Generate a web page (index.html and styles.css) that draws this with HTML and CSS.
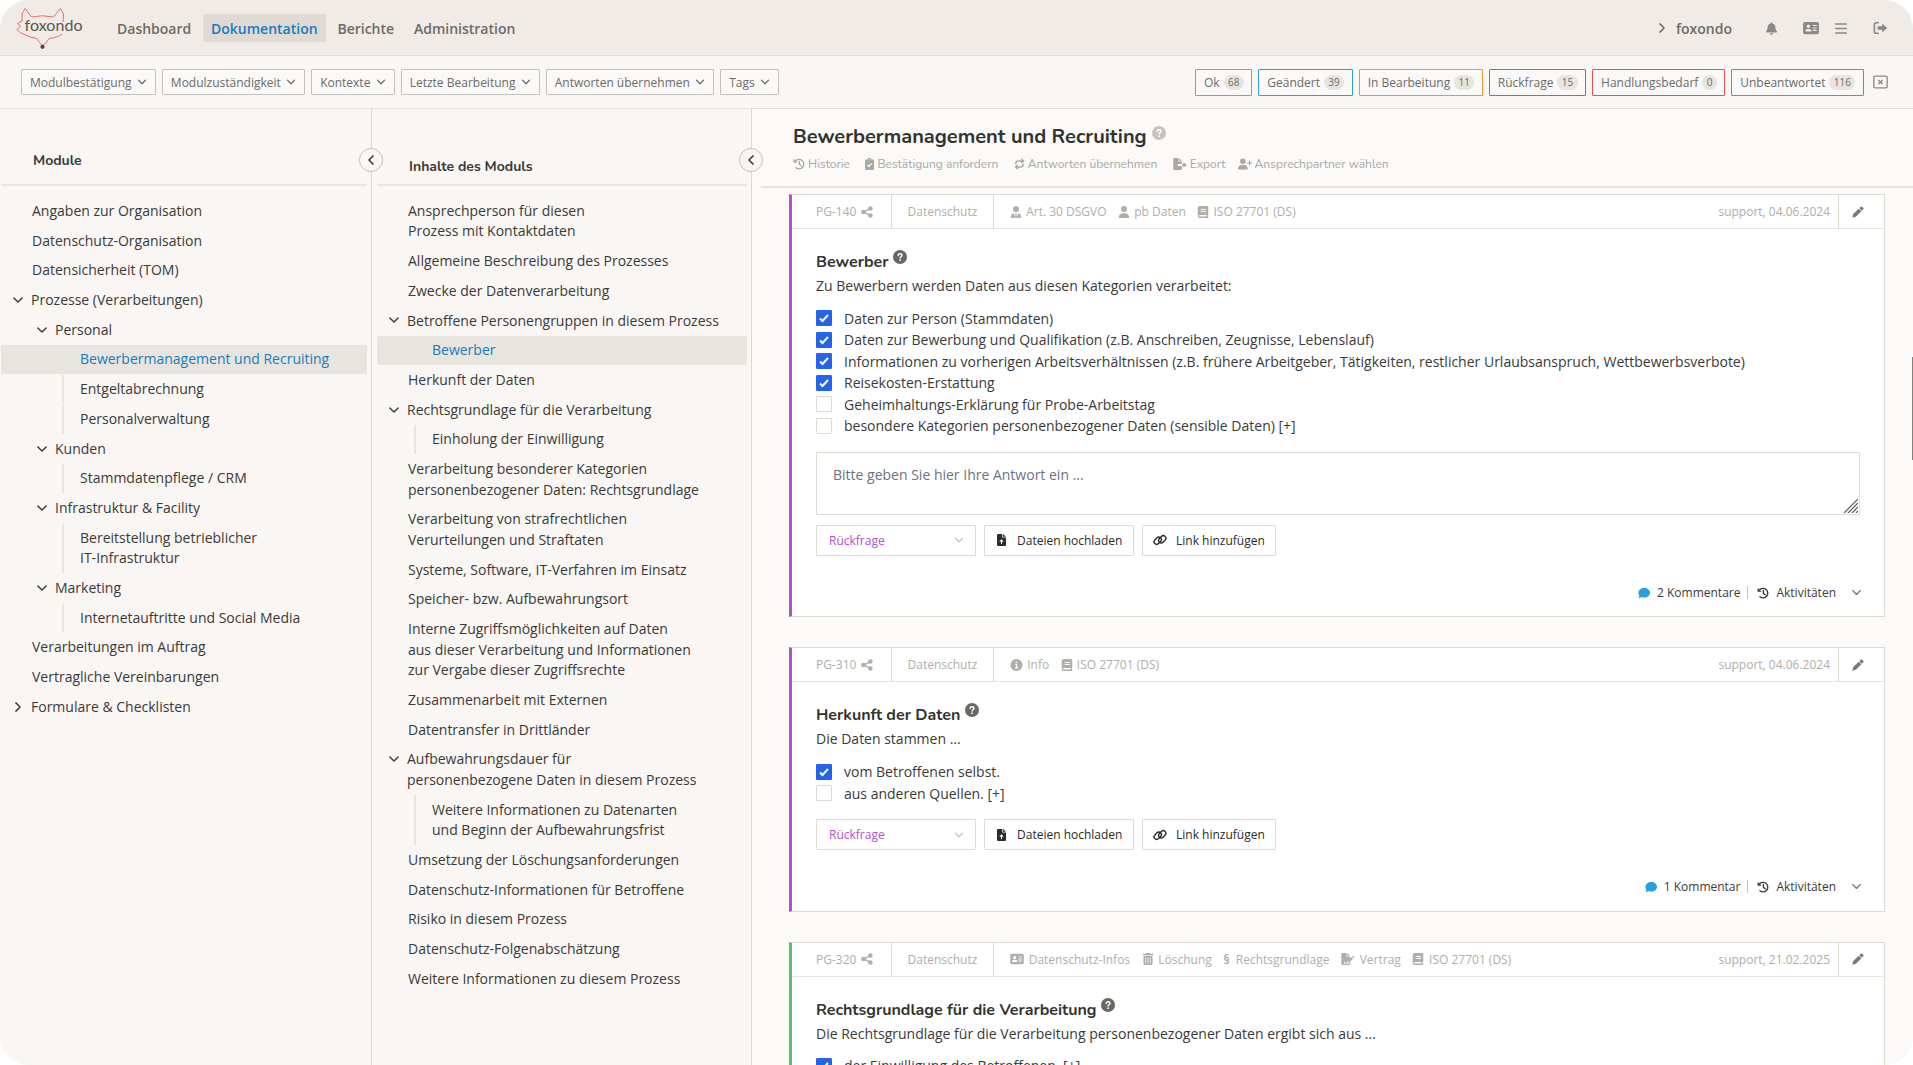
FILE: index.html
```html
<!DOCTYPE html>
<html lang="de">
<head>
  <meta charset="UTF-8">
  <title>foxondo - Dokumentation</title>
  <link rel="stylesheet" href="styles.css">
</head>

<body>
  <!-- icon sprite -->
  <svg class="sprite" xmlns="http://www.w3.org/2000/svg">
    <symbol id="down" viewBox="0 0 16 16"><path d="M2.5 5.2 8 10.8l5.500-5.600" fill="none" stroke="currentColor" stroke-width="1.9" stroke-linecap="round" stroke-linejoin="round"/></symbol>
    <symbol id="right" viewBox="0 0 16 16"><path d="M5.200 2.500 10.800 8l-5.600 5.500" fill="none" stroke="currentColor" stroke-width="1.9" stroke-linecap="round" stroke-linejoin="round"/></symbol>
    <symbol id="left" viewBox="0 0 16 16"><path d="M10.800 2.500 5.200 8l5.600 5.500" fill="none" stroke="currentColor" stroke-width="1.9" stroke-linecap="round" stroke-linejoin="round"/></symbol>
    <symbol id="bell" viewBox="0 0 448 512"><path d="M224 512c35.320 0 63.970-28.650 63.970-64H160.030c0 35.350 28.650 64 63.970 64zm215.390-149.710c-19.320-20.760-55.470-51.990-55.470-154.290 0-77.700-54.480-139.900-127.940-155.160V32c0-17.670-14.320-32-31.980-32s-31.980 14.330-31.980 32v20.840C118.560 68.100 64.080 130.300 64.080 208c0 102.300-36.150 133.530-55.470 154.290-6 6.450-8.660 14.160-8.610 21.710.11 16.400 12.980 32 32.100 32h383.800c19.120 0 32-15.600 32.100-32 .05-7.550-2.610-15.270-8.610-21.710z" fill="currentColor"/></symbol>
    <symbol id="idcard" viewBox="0 0 18 16"><path fill="currentColor" fill-rule="evenodd" d="M2 1h14a2 2 0 0 1 2 2v10a2 2 0 0 1-2 2H2a2 2 0 0 1-2-2V3a2 2 0 0 1 2-2zM6 4a2 2 0 1 0 0 4 2 2 0 0 0 0-4zM5 9a2.500 2.500 0 0 0-2.500 2.500v.5h7v-.5A2.500 2.500 0 0 0 7 9zM11 4.500v1.300h4.500V4.500zM11 7.300v1.300h4.500V7.300zM11 10.100v1.300h4.500v-1.300z"/></symbol>
    <symbol id="bars" viewBox="0 0 16 16"><path d="M1.500 2.500h13M1.500 8h13M1.500 13.500h13" stroke="currentColor" stroke-width="1.900" stroke-linecap="round"/></symbol>
    <symbol id="logout" viewBox="0 0 16 16"><path d="M5.500 2H3a2 2 0 0 0-2 2v8a2 2 0 0 0 2 2h2.500" fill="none" stroke="currentColor" stroke-width="1.800" stroke-linecap="round"/><path d="M10 2.900 15.600 8 10 13.100V10H5.500a.8.8 0 0 1-.8-.8V6.800a.8.8 0 0 1 .8-.8H10z" fill="currentColor"/></symbol>
    <symbol id="closebox" viewBox="0 0 18 16"><rect x="1" y="1" width="16" height="14" rx="1.500" fill="none" stroke="currentColor" stroke-width="1.600"/><path d="m6.500 5.500 5 5m0-5-5 5" stroke="currentColor" stroke-width="1.800"/></symbol>
    <symbol id="help" viewBox="0 0 16 16"><circle cx="8" cy="8" r="8" fill="currentColor"/><path d="M5.900 6.200c0-1.200.9-1.900 2.100-1.900s2.200.7 2.200 1.900c0 1.500-2.100 1.500-2.100 3" fill="none" stroke="#fff" stroke-width="1.600" stroke-linecap="round"/><circle cx="8.100" cy="11.600" r="1" fill="#fff"/></symbol>
    <symbol id="history" viewBox="0 0 16 16"><path d="M3.200 4.200A6.300 6.300 0 1 1 3.900 12.900M8.500 4.700V8.300l2.400 2.100" fill="none" stroke="currentColor" stroke-width="1.800" stroke-linecap="round" stroke-linejoin="round"/><path d="M.8.900v5.400h5.400z" fill="currentColor"/></symbol>
    <symbol id="clipboard" viewBox="0 0 12 16"><path fill="currentColor" d="M1.500 2h2a2.500 2.500 0 0 1 5 0h2A1.500 1.500 0 0 1 12 3.500v11a1.500 1.500 0 0 1-1.500 1.500h-9A1.500 1.500 0 0 1 0 14.500v-11A1.500 1.500 0 0 1 1.500 2z"/><circle cx="6" cy="2.400" r=".8" fill="#fff"/><path d="m3.200 9.300 2 2 3.700-4" fill="none" stroke="#fff" stroke-width="1.500"/></symbol>
    <symbol id="swap" viewBox="0 0 14 16"><path d="M1.800 7.500 3 4.800A1.500 1.500 0 0 1 4.400 4H10M12.200 8.500 11 11.200a1.500 1.500 0 0 1-1.400.8H4.500" fill="none" stroke="currentColor" stroke-width="2" stroke-linecap="round"/><path d="m9.500 0 4.500 4-4.500 4zM4.800 8 .3 12l4.500 4z" fill="currentColor"/></symbol>
    <symbol id="export" viewBox="0 0 18 16"><path fill="currentColor" d="M1.500 0H7v4.500h4.500V8H6v2.500h5.500v4a1.500 1.500 0 0 1-1.500 1.500H1.500A1.500 1.500 0 0 1 0 14.500v-13A1.500 1.500 0 0 1 1.500 0zM8 0l3.500 3.500H8zM13.500 5.500l4.500 3.800-4.500 3.700v-2.500H12V8h1.500z"/></symbol>
    <symbol id="userplus" viewBox="0 0 20 16"><circle cx="7" cy="4" r="4" fill="currentColor"/><path d="M5.500 9.500h3A5.500 5.500 0 0 1 14 15a1 1 0 0 1-1 1H1a1 1 0 0 1-1-1 5.500 5.500 0 0 1 5.500-5.500z" fill="currentColor"/><path d="M16.500 3.500v6M13.500 6.500h6" stroke="currentColor" stroke-width="1.600" stroke-linecap="round"/></symbol>
    <symbol id="user" viewBox="0 0 448 512"><path fill="currentColor" d="M224 256A128 128 0 1 0 224 0a128 128 0 1 0 0 256zm-45.700 48C79.800 304 0 383.800 0 482.300C0 498.700 13.300 512 29.700 512H418.300c16.400 0 29.700-13.300 29.700-29.700C448 383.800 368.200 304 269.700 304H178.300z"/></symbol>
    <symbol id="usertie" viewBox="0 0 14 16"><circle cx="7" cy="4" r="4" fill="currentColor"/><path fill="currentColor" d="M4 9.500 6 16H1a1 1 0 0 1-1-1c0-2.800 1.600-5 4-5.500zM10 9.500c2.400.5 4 2.700 4 5.500a1 1 0 0 1-1 1H8zM5.800 9.500h2.400l-.6 1.700.9 3L7 16l-1.500-1.800.9-3z"/></symbol>
    <symbol id="share" viewBox="0 0 16 16"><path d="M12.300 3.500 4 8l8.300 4.500" fill="none" stroke="currentColor" stroke-width="1.800"/><circle cx="12.500" cy="3.300" r="3.100" fill="currentColor"/><circle cx="3.300" cy="8" r="3.100" fill="currentColor"/><circle cx="12.500" cy="12.700" r="3.100" fill="currentColor"/></symbol>
    <symbol id="book" viewBox="0 0 14 16"><path fill="currentColor" fill-rule="evenodd" d="M2.800 0H13a1 1 0 0 1 1 1v10a1 1 0 0 1-.6.900V14a1 1 0 0 1 0 2H2.800A2.800 2.800 0 0 1 0 13.200V2.800A2.800 2.800 0 0 1 2.800 0zM2.800 12a1 1 0 0 0 0 2H11.700v-2zM4 4v1.200h7V4zM4 6.800V8h7V6.800z"/></symbol>
    <symbol id="info" viewBox="0 0 16 16"><circle cx="8" cy="8" r="8" fill="currentColor"/><path d="M6.300 7.300H8.200V11.500M6 11.800h4.300" fill="none" stroke="#fff" stroke-width="1.500"/><circle cx="7.900" cy="4.500" r="1.100" fill="#fff"/></symbol>
    <symbol id="trash" viewBox="0 0 14 16"><path fill="currentColor" fill-rule="evenodd" d="M4.500 0h5l.6 1H14v2H0V1h3.900zM1 4h12v10.500a1.500 1.500 0 0 1-1.500 1.500h-9A1.500 1.500 0 0 1 1 14.500zM3.700 6v8h.9V6zM6.600 6v8h.9V6zM9.500 6v8h.9V6z"/></symbol>
    <symbol id="contract" viewBox="0 0 18 16"><path fill="currentColor" d="M1.500 0H7v4.500h5V7L8 11l-.6 2.500H5.500L4.500 11l-1.400 3.200H9.500L12 12v2.500a1.500 1.500 0 0 1-1.500 1.500h-9A1.500 1.500 0 0 1 0 14.500v-13A1.500 1.500 0 0 1 1.500 0zM8 0l4 3.500H8zM15.500 3.500l2.200 2.200-1.300 1.300-2.200-2.200zM13.500 5.500l2.200 2.200-4.700 4.600-2.600.7.600-2.800z"/></symbol>
    <symbol id="pencil" viewBox="0 0 16 16"><path fill="currentColor" d="M11.300 1.200a1.800 1.800 0 0 1 2.500 0l1 1a1.800 1.800 0 0 1 0 2.500l-1.600 1.600-3.500-3.500zM9 3.500 12.500 7l-7.300 7.300L.3 15.700l1.400-4.900z"/></symbol>
    <symbol id="upload" viewBox="0 0 12 16"><path fill="currentColor" d="M1.500 0H7v4.500h5v10a1.500 1.500 0 0 1-1.500 1.500h-9A1.500 1.500 0 0 1 0 14.500v-13A1.500 1.500 0 0 1 1.500 0zM8 0l4 3.500H8z"/><path d="M6 13.200V8.400M3.700 10.200 6 7.900l2.300 2.300" fill="none" stroke="#fff" stroke-width="1.400"/></symbol>
    <symbol id="link" viewBox="0 0 20 16"><g fill="none" stroke="currentColor" stroke-width="2"><rect x="1" y="5.300" width="11.500" height="7.400" rx="3.700" transform="rotate(-45 6.750 9)"/><rect x="7.500" y="3.300" width="11.500" height="7.400" rx="3.700" transform="rotate(-45 13.250 7)"/></g></symbol>
    <symbol id="comment" viewBox="0 0 16 16"><path fill="currentColor" d="M8.300 1.200c4.300 0 7.700 2.800 7.700 6.400S12.600 14 8.300 14c-1.300 0-2.400-.2-3.500-.7-1.100.9-2.700 1.400-4.600 1.400.9-.8 1.600-2 1.700-3A6 6 0 0 1 .6 7.600c0-3.600 3.400-6.400 7.700-6.400z"/></symbol>
  </svg>

  <div class="app">

    <!-- top navigation -->
    <header class="topbar">
      <svg class="logo" width="90" height="56" viewBox="0 0 90 56">
        <g fill="none" stroke="#e8706f" stroke-width="1" stroke-linejoin="round">
          <path d="M63 22 63.500 14 60.500 8.500 53.500 17Q42 14.500 31.500 17L25 8.500 22 14 22 21 17.500 23.500 20.500 26 17 29.500 20 32.500 30 37 37 38.500 39.500 42.500 42.500 46"/>
          <path d="M62 34Q58 37.500 49 38.500L46 43 42.500 46"/>
        </g>
        <circle cx="42.500" cy="46.800" r="2.100" fill="#4a463c"/>
        <text class="logo-text" x="24.500" y="31" textLength="58">foxondo</text>
      </svg>
      <nav class="nav">
        <a class="nav-link">Dashboard</a>
        <a class="nav-link active">Dokumentation</a>
        <a class="nav-link">Berichte</a>
        <a class="nav-link">Administration</a>
      </nav>
      <div class="account">
        <svg class="i-arrow"><use href="#right"/></svg>
        <span class="tenant">foxondo</span>
        <svg class="i-bell"><use href="#bell"/></svg>
        <svg class="i-card"><use href="#idcard"/></svg>
        <svg class="i-bars"><use href="#bars"/></svg>
        <svg class="i-logout"><use href="#logout"/></svg>
      </div>
    </header>

    <!-- filter bar -->
    <div class="filterbar">
      <div class="filters">
        <button class="filter">Modulbestätigung <svg><use href="#down"/></svg></button>
        <button class="filter">Modulzuständigkeit <svg><use href="#down"/></svg></button>
        <button class="filter">Kontexte <svg><use href="#down"/></svg></button>
        <button class="filter">Letzte Bearbeitung <svg><use href="#down"/></svg></button>
        <button class="filter">Antworten übernehmen <svg><use href="#down"/></svg></button>
        <button class="filter">Tags <svg><use href="#down"/></svg></button>
      </div>
      <div class="states">
        <span class="state ok">Ok <b>68</b></span>
        <span class="state changed">Geändert <b>39</b></span>
        <span class="state progress">In Bearbeitung <b>11</b></span>
        <span class="state query">Rückfrage <b>15</b></span>
        <span class="state action">Handlungsbedarf <b>0</b></span>
        <span class="state open">Unbeantwortet <b>116</b></span>
        <svg class="i-close"><use href="#closebox"/></svg>
      </div>
    </div>

    <div class="columns">

      <!-- modules -->
      <aside class="col modules">
        <h2 class="col-title">Module</h2>
        <span class="collapse"><svg><use href="#left"/></svg></span>
        <ul class="tree">
          <li class="item">Angaben zur Organisation</li>
          <li class="item">Datenschutz-Organisation</li>
          <li class="item">Datensicherheit (TOM)</li>
          <li class="item parent"><svg><use href="#down"/></svg>Prozesse (Verarbeitungen)</li>
          <li class="item parent sub"><svg><use href="#down"/></svg>Personal</li>
          <li class="item leaf selected">Bewerbermanagement und Recruiting</li>
          <li class="item leaf">Entgeltabrechnung</li>
          <li class="item leaf">Personalverwaltung</li>
          <li class="item parent sub"><svg><use href="#down"/></svg>Kunden</li>
          <li class="item leaf">Stammdatenpflege / CRM</li>
          <li class="item parent sub"><svg><use href="#down"/></svg>Infrastruktur &amp; Facility</li>
          <li class="item leaf">Bereitstellung betrieblicher<br>IT-Infrastruktur</li>
          <li class="item parent sub"><svg><use href="#down"/></svg>Marketing</li>
          <li class="item leaf">Internetauftritte und Social Media</li>
          <li class="item">Verarbeitungen im Auftrag</li>
          <li class="item">Vertragliche Vereinbarungen</li>
          <li class="item parent"><svg><use href="#right"/></svg>Formulare &amp; Checklisten</li>
        </ul>
      </aside>

      <!-- contents of the module -->
      <aside class="col contents">
        <h2 class="col-title">Inhalte des Moduls</h2>
        <span class="collapse"><svg><use href="#left"/></svg></span>
        <ul class="tree">
          <li class="item">Ansprechperson für diesen<br>Prozess mit Kontaktdaten</li>
          <li class="item">Allgemeine Beschreibung des Prozesses</li>
          <li class="item">Zwecke der Datenverarbeitung</li>
          <li class="item parent"><svg><use href="#down"/></svg>Betroffene Personengruppen in diesem Prozess</li>
          <li class="item leaf selected">Bewerber</li>
          <li class="item">Herkunft der Daten</li>
          <li class="item parent"><svg><use href="#down"/></svg>Rechtsgrundlage für die Verarbeitung</li>
          <li class="item leaf">Einholung der Einwilligung</li>
          <li class="item">Verarbeitung besonderer Kategorien<br>personenbezogener Daten: Rechtsgrundlage</li>
          <li class="item">Verarbeitung von strafrechtlichen<br>Verurteilungen und Straftaten</li>
          <li class="item">Systeme, Software, IT-Verfahren im Einsatz</li>
          <li class="item">Speicher- bzw. Aufbewahrungsort</li>
          <li class="item">Interne Zugriffsmöglichkeiten auf Daten<br>aus dieser Verarbeitung und Informationen<br>zur Vergabe dieser Zugriffsrechte</li>
          <li class="item">Zusammenarbeit mit Externen</li>
          <li class="item">Datentransfer in Drittländer</li>
          <li class="item parent"><svg><use href="#down"/></svg>Aufbewahrungsdauer für<br>personenbezogene Daten in diesem Prozess</li>
          <li class="item leaf">Weitere Informationen zu Datenarten<br>und Beginn der Aufbewahrungsfrist</li>
          <li class="item">Umsetzung der Löschungsanforderungen</li>
          <li class="item">Datenschutz-Informationen für Betroffene</li>
          <li class="item">Risiko in diesem Prozess</li>
          <li class="item">Datenschutz-Folgenabschätzung</li>
          <li class="item">Weitere Informationen zu diesem Prozess</li>
        </ul>
      </aside>

      <!-- questions -->
      <main class="main">
        <div class="main-head">
          <h1 class="title">Bewerbermanagement und Recruiting <svg class="help"><use href="#help"/></svg></h1>
          <div class="tools">
            <a class="tool"><svg class="w12"><use href="#history"/></svg>Historie</a>
            <a class="tool"><svg class="w9"><use href="#clipboard"/></svg>Bestätigung anfordern</a>
            <a class="tool"><svg class="w11"><use href="#swap"/></svg>Antworten übernehmen</a>
            <a class="tool"><svg class="w14"><use href="#export"/></svg>Export</a>
            <a class="tool"><svg class="w14"><use href="#userplus"/></svg>Ansprechpartner wählen</a>
          </div>
        </div>

        <div class="cards">
          <section class="card">
            <div class="card-head">
              <span class="cell id">PG-140 <svg class="w12"><use href="#share"/></svg></span>
              <span class="cell topic">Datenschutz</span>
              <span class="cell tags">
                <span class="tag"><svg class="w12"><use href="#usertie"/></svg>Art. 30 DSGVO</span>
                <span class="tag"><svg class="w12"><use href="#user"/></svg>pb Daten</span>
                <span class="tag"><svg class="w12"><use href="#book"/></svg>ISO 27701 (DS)</span>
              </span>
              <span class="stamp">support, 04.06.2024</span>
              <span class="edit"><svg><use href="#pencil"/></svg></span>
            </div>
            <div class="card-body">
              <h3 class="question">Bewerber <svg class="help"><use href="#help"/></svg></h3>
              <p class="text">Zu Bewerbern werden Daten aus diesen Kategorien verarbeitet:</p>
              <div class="options">
                <label class="option"><input type="checkbox" checked>Daten zur Person (Stammdaten)</label>
                <label class="option"><input type="checkbox" checked>Daten zur Bewerbung und Qualifikation (z.B. Anschreiben, Zeugnisse, Lebenslauf)</label>
                <label class="option"><input type="checkbox" checked>Informationen zu vorherigen Arbeitsverhältnissen (z.B. frühere Arbeitgeber, Tätigkeiten, restlicher Urlaubsanspruch, Wettbewerbsverbote)</label>
                <label class="option"><input type="checkbox" checked>Reisekosten-Erstattung</label>
                <label class="option"><input type="checkbox">Geheimhaltungs-Erklärung für Probe-Arbeitstag</label>
                <label class="option"><input type="checkbox">besondere Kategorien personenbezogener Daten (sensible Daten) [+]</label>
              </div>
              <div class="answer">
                <textarea class="answer-text" placeholder="Bitte geben Sie hier Ihre Antwort ein ..."></textarea>
                <svg class="grip" viewBox="0 0 14 14"><path d="M0 14 14 0M4 14 14 4M8 14l6-6M12 14l2-2" stroke="#5c5c60" stroke-width="1.200"/></svg>
              </div>
              <div class="actions">
                <span class="select">Rückfrage <svg><use href="#down"/></svg></span>
                <button class="btn"><svg class="w9"><use href="#upload"/></svg>Dateien hochladen</button>
                <button class="btn link"><svg class="w14"><use href="#link"/></svg>Link hinzufügen</button>
              </div>
            </div>
            <div class="card-foot">
              <span class="comments"><svg class="w12"><use href="#comment"/></svg>2 Kommentare</span>
              <span class="activity"><svg class="w12"><use href="#history"/></svg>Aktivitäten</span>
              <svg class="more"><use href="#down"/></svg>
            </div>
          </section>

          <section class="card">
            <div class="card-head">
              <span class="cell id">PG-310 <svg class="w12"><use href="#share"/></svg></span>
              <span class="cell topic">Datenschutz</span>
              <span class="cell tags">
                <span class="tag"><svg class="w13"><use href="#info"/></svg>Info</span>
                <span class="tag"><svg class="w12"><use href="#book"/></svg>ISO 27701 (DS)</span>
              </span>
              <span class="stamp">support, 04.06.2024</span>
              <span class="edit"><svg><use href="#pencil"/></svg></span>
            </div>
            <div class="card-body">
              <h3 class="question">Herkunft der Daten <svg class="help"><use href="#help"/></svg></h3>
              <p class="text">Die Daten stammen ...</p>
              <div class="options">
                <label class="option"><input type="checkbox" checked>vom Betroffenen selbst.</label>
                <label class="option"><input type="checkbox">aus anderen Quellen. [+]</label>
              </div>
              <div class="actions">
                <span class="select">Rückfrage <svg><use href="#down"/></svg></span>
                <button class="btn"><svg class="w9"><use href="#upload"/></svg>Dateien hochladen</button>
                <button class="btn link"><svg class="w14"><use href="#link"/></svg>Link hinzufügen</button>
              </div>
            </div>
            <div class="card-foot">
              <span class="comments"><svg class="w12"><use href="#comment"/></svg>1 Kommentar</span>
              <span class="activity"><svg class="w12"><use href="#history"/></svg>Aktivitäten</span>
              <svg class="more"><use href="#down"/></svg>
            </div>
          </section>

          <section class="card done">
            <div class="card-head">
              <span class="cell id">PG-320 <svg class="w12"><use href="#share"/></svg></span>
              <span class="cell topic">Datenschutz</span>
              <span class="cell tags">
                <span class="tag"><svg class="w14"><use href="#idcard"/></svg>Datenschutz-Infos</span>
                <span class="tag"><svg class="w12"><use href="#trash"/></svg>Löschung</span>
                <span class="tag"><b class="para">§</b>Rechtsgrundlage</span>
                <span class="tag"><svg class="w14"><use href="#contract"/></svg>Vertrag</span>
                <span class="tag"><svg class="w12"><use href="#book"/></svg>ISO 27701 (DS)</span>
              </span>
              <span class="stamp">support, 21.02.2025</span>
              <span class="edit"><svg><use href="#pencil"/></svg></span>
            </div>
            <div class="card-body">
              <h3 class="question">Rechtsgrundlage für die Verarbeitung <svg class="help"><use href="#help"/></svg></h3>
              <p class="text">Die Rechtsgrundlage für die Verarbeitung personenbezogener Daten ergibt sich aus ...</p>
              <div class="options">
                <label class="option"><input type="checkbox" checked>der Einwilligung des Betroffenen. [+]</label>
              </div>
            </div>
          </section>
        </div>
        <span class="scrollthumb"></span>
      </main>
    </div>
  </div>
</body>
</html>
```
FILE: styles.css
```css
* { box-sizing: border-box; }

body {
  margin: 0;
  background: #fff;
  font-family: "Open Sans", sans-serif;
  font-size: 14px;
  color: #3a3a38;
}

.sprite { display: none; }
h1, h2, h3, p, ul { margin: 0; padding: 0; }
button { font-family: inherit; }
svg { flex: none; }
.w9  { width: 9px;  height: 12px; }
.w11 { width: 11px; height: 12px; }
.w12 { width: 12px; height: 12px; }
.w13 { width: 13px; height: 12px; }
.w14 { width: 14px; height: 12px; }

.app {
  display: flex;
  flex-direction: column;
  width: 1913px;
  height: 1065px;
  border-radius: 29px;
  overflow: hidden;
  background: #f9f6f3;
}

/**********
 * topbar *
 **********/
.topbar {
  display: flex;
  align-items: center;
  flex: none;
  height: 56px;
  padding-top: 1px;
  background: #f0ebe6;
  border-bottom: 1px solid #e0dcd5;
}
.logo { margin-right: 19px; }
.logo-text { font-family: Lato, sans-serif; font-size: 16px; fill: #5a564c; }

.nav { display: flex; gap: 3.800px; }
.nav-link {
  height: 28px;
  padding: 0 8px;
  line-height: 29px;
  font-weight: 600;
  border-radius: 2px;
  color: #6b6b67;
}
.nav-link.active { background: #dfdbd4; color: #1a7abf; }

.account {
  display: flex;
  align-items: center;
  margin-left: auto;
  margin-right: 25px;
  color: #8a8884;
}
.tenant { padding-top: 1px; font-weight: 600; color: #6b6b67; }
.i-arrow  { width: 12px; height: 12px; margin-right: 8px; color: #6b6b67; }
.i-bell   { width: 11px; height: 13px; margin-left: 34px; }
.i-card   { width: 16px; height: 14px; margin-left: 26px; }
.i-bars   { width: 14px; height: 13px; margin-left: 15px; }
.i-logout { width: 15px; height: 14px; margin-left: 25px; }

/*************
 * filterbar *
 *************/
.filterbar {
  display: flex;
  justify-content: space-between;
  align-items: center;
  flex: none;
  height: 53px;
  padding: 0 25px 0 21px;
  border-bottom: 1px solid #e3dfd9;
}
.filters, .states { display: flex; align-items: center; gap: 6px; }
.filter {
  display: flex;
  align-items: center;
  gap: 5.300px;
  height: 26px;
  padding: 0 8px;
  border: 1px solid #c3c1bc;
  border-radius: 1px;
  background: #fbf9f7;
  font-size: 12px;
  color: #6b6b67;
}
.filter svg { width: 10px; height: 10px; }

.state {
  display: flex;
  align-items: center;
  gap: 4px;
  height: 27px;
  padding: 0 7.800px;
  border: 1px solid;
  border-radius: 1px;
  background: #fbf9f7;
  font-size: 12px;
}
.state b {
  height: 15px;
  padding: 0 4.300px;
  border-radius: 8px;
  background: #e8e5df;
  line-height: 15px;
  font-size: 10px;
  font-weight: 400;
}
.state, .state b { color: #6b6b67; }
.ok       { border-color: #5fbf6b; }
.changed  { border-color: #28a0dc; }
.progress { border-color: #f0962d; }
.query    { border-color: #b44fc9; }
.action   { border-color: #e9504f; }
.open     { border-color: #748c9c; }
.i-close { width: 15px; height: 14px; margin-left: 3px; color: #8a8884; }

/***********
 * columns *
 ***********/
.columns { display: flex; flex: 1; min-height: 0; }

.col { position: relative; border-right: 1px solid #dcd9d4; }
.modules  { width: 372px; padding: 0 4px 0 1px; }
.contents { width: 380px; padding: 0 4px 0 5px; }
.col-title {
  height: 77px;
  padding: 42px 0 0 32px;
  border-bottom: 2px solid #e8e5df;
  line-height: 20px;
  font-family: Nunito, Lato, sans-serif;
  font-size: 14px;
  font-weight: 700;
}
.contents .col-title { padding-top: 48px; }

/* round button that sits on the column border */
.collapse {
  position: absolute;
  top: 39px;
  right: -12px;
  z-index: 2;
  display: flex;
  align-items: center;
  justify-content: center;
  width: 24px;
  height: 24px;
  border: 1px solid #c3c1bc;
  border-radius: 50%;
  background: #f9f6f3;
}
.collapse svg { width: 12px; height: 12px; }

.tree { padding-top: 10.800px; list-style: none; }
.item {
  position: relative;
  margin-bottom: 1px;
  padding: 4.100px 0 4.100px 31px;
  border-radius: 2px;
  line-height: 20.530px;
}
.item svg { position: absolute; left: 11px; top: 8px; width: 12px; height: 12px; }
.item.parent { padding-left: 30px; }
.item.sub { padding-left: 54px; }
.item.sub svg { left: 35px; }
.modules .leaf { margin-left: 61px; padding-left: 16px; border-left: 2px solid #e8e5df; border-radius: 0; }
.contents .leaf { margin-left: 37px; padding-left: 16px; border-left: 2px solid #e8e5df; border-radius: 0; }
.tree .selected {
  margin-left: 0;
  border-left: 0;
  border-radius: 2px;
  background: #e8e5df;
  color: #1a7abf;
}
.modules .selected { padding-left: 79px; }
.contents .selected { padding-left: 55px; }

/********
 * main *
 ********/
.main { position: relative; flex: 1; min-width: 0; background: #fbfaf8; }
.main-head {
  height: 79px;
  margin-left: 9px;
  padding: 14px 0 0 32px;
  border-bottom: 2px solid #e8e5df;
}
.title, .question, .tools { font-family: Nunito, Lato, sans-serif; }
.title, .question { font-weight: 700; color: #33332f; }
.title { line-height: 28px; font-size: 20px; }
.help { width: 14px; height: 14px; }
.title .help { vertical-align: 3px; color: #c5c3be; }
.tools { display: flex; margin-top: 4px; line-height: 18px; font-size: 12px; color: #a9a8a3; }
.tool { display: flex; align-items: center; gap: 3px; margin-right: 15.500px; }
.tool:nth-child(4) { margin-right: 12px; }

.cards { padding: 6px 28px 0 37px; }
.card {
  margin-bottom: 29.800px;
  border: 1px solid #dedad2;
  border-left: 3px solid #b44fc9;
  background: #fff;
}
.card.done { border-left-color: #5fbf6b; }

.card-head {
  display: flex;
  height: 34px;
  border-bottom: 1px solid #e8e5df;
  font-size: 12px;
  color: #afaea9;
}
.cell, .stamp, .edit, .tag { display: flex; align-items: center; }
.id { width: 100px; padding-left: 24px; gap: 5px; border-right: 1px solid #dedad2; }
.topic { width: 102px; padding-left: 15.500px; border-right: 1px solid #dedad2; }
.tags { gap: 11.500px; padding-left: 16px; }
.tag { gap: 4.200px; }
.done .tag { gap: 4.700px; }
.para { margin-right: 1.500px; font-size: 13px; }
.stamp { margin-left: auto; padding-right: 8px; }
.edit { width: 46px; padding-left: 13px; border-left: 1px solid #dedad2; color: #7a7975; }
.edit svg { width: 12px; height: 12px; }

.card-body { padding: 21px 24px 0; }
.question { line-height: 24px; font-size: 16px; }
.question .help { vertical-align: 3px; color: #6b6863; }
.text { line-height: 24px; }

.options { margin-top: 9.700px; }
.option { display: flex; align-items: center; height: 21.500px; }
.option input {
  appearance: none;
  width: 16px;
  height: 16px;
  margin: 0 12px 0 0;
  border: 1px solid #dedad2;
  border-radius: 1px;
  background: #fff;
}
.option input:checked {
  border-color: #2563eb;
  background: #2563eb url("data:image/svg+xml,%3Csvg xmlns='http://www.w3.org/2000/svg' viewBox='0 0 16 16'%3E%3Cpath d='m4 8.500 2.500 2.500 5.500-6' fill='none' stroke='%23fff' stroke-width='2'/%3E%3C/svg%3E") center / 16px;
}

.answer { position: relative; height: 63.500px; margin-top: 15.300px; }
.answer-text {
  display: block;
  width: 100%;
  height: 100%;
  padding: 12px 16px;
  border: 1px solid #dedad2;
  border-radius: 1px;
  resize: none;
  font: inherit;
}
.answer-text::placeholder { color: #6b7280; }
.grip { position: absolute; right: 2px; bottom: 2px; width: 14px; height: 14px; }

.actions { display: flex; gap: 8px; margin-top: 15.500px; }
.answer + .actions { margin-top: 9.700px; }
.select, .btn {
  display: flex;
  align-items: center;
  height: 30.500px;
  padding: 0 12px;
  border: 1px solid #dedad2;
  border-radius: 1px;
  background: #fff;
  font-size: 12px;
  white-space: nowrap;
}
.select { justify-content: space-between; width: 160px; padding-right: 11px; color: #b44fc9; }
.select svg { width: 10px; height: 10px; color: #c5c3be; }
.btn { width: 150px; gap: 11px; color: #2b2b28; }
.btn.link { width: 134px; gap: 9px; padding: 0 10px; }

.card-foot {
  display: flex;
  justify-content: flex-end;
  align-items: center;
  height: 24px;
  margin: 25px 22px 11.800px;
  font-size: 12px;
}
.comments, .activity { display: flex; align-items: center; gap: 7px; }
.comments svg { color: #28a0dc; }
.comments::after { content: ""; height: 13px; border-right: 1px solid #c5c3be; }
.activity { padding-left: 9px; }
.more { width: 11px; height: 11px; margin-left: 15px; color: #7a7975; }

.scrollthumb { position: absolute; right: 0; top: 248px; width: 1px; height: 103px; background: #8a8078; }
```
